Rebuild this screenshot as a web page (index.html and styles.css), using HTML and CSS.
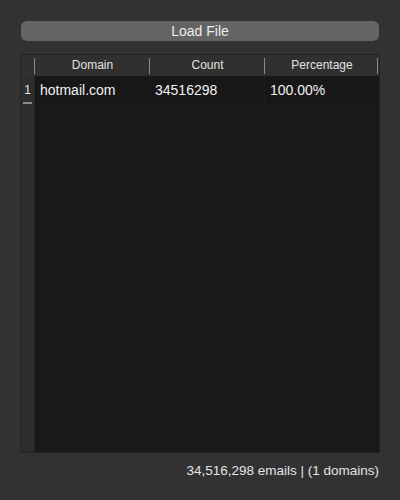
FILE: index.html
```html
<!DOCTYPE html>
<html>
<head>
<meta charset="utf-8">
<link rel="stylesheet" href="styles.css">
</head>
<body>
<div class="app">
  <button class="load-btn">Load File</button>
  <div class="table">
    <div class="head">
      <div class="corner"></div>
      <div class="hcell">Domain</div>
      <div class="hcell">Count</div>
      <div class="hcell last">Percentage</div>
    </div>
    <div class="body">
      <div class="rowheads">
        <div class="rownum">1</div>
      </div>
      <div class="rows">
        <div class="row">
          <div class="cell">hotmail.com</div>
          <div class="cell">34516298</div>
          <div class="cell">100.00%</div>
        </div>
      </div>
    </div>
  </div>
  <div class="status">34,516,298 emails | (1 domains)</div>
</div>
</body>
</html>
```
FILE: styles.css
```css
html, body {
  margin: 0;
  padding: 0;
  background: #323232;
  font-family: "Liberation Sans", Arial, sans-serif;
  color: #e6e6e6;
}
.app {
  width: 400px;
  height: 500px;
  box-sizing: border-box;
  padding: 21px 20px 0 20px;
  display: flex;
  flex-direction: column;
}
.load-btn {
  margin: 0 1px;
  height: 20px;
  border: none;
  border-radius: 6px;
  background: #646464;
  color: #ececec;
  font-family: "Liberation Sans", Arial, sans-serif;
  font-size: 14px;
  padding: 0;
  line-height: 20px;
}
.table {
  margin-top: 13px;
  height: 399px;
  box-sizing: border-box;
  border: 1px solid #242424;
  display: flex;
  flex-direction: column;
  background: #191919;
}
.head {
  height: 21px;
  display: grid;
  grid-template-columns: 14px 115px 115px 114px;
  background: #303030;
  flex: none;
}
.hcell {
  font-size: 12px;
  line-height: 21px;
  text-align: center;
  color: #e2e2e2;
  position: relative;
}
.corner { position: relative; }
.corner::after, .hcell::after {
  content: "";
  position: absolute;
  right: 0;
  top: 3px;
  height: 16px;
  width: 1px;
  background: #8a8a8a;
}
.hcell.last::after { right: 1px; }
.body {
  flex: 1;
  display: grid;
  grid-template-columns: 14px 1fr;
}
.rowheads {
  background: #2d2d2d;
  border-right: 1px solid #262626;
}
.rownum {
  height: 27px;
  font-size: 12px;
  line-height: 28px;
  text-align: center;
  color: #e6e6e6;
  position: relative;
}
.rownum::after {
  content: "";
  position: absolute;
  left: 2px;
  right: 2px;
  bottom: -1px;
  height: 2px;
  background: #8c8c8c;
}
.row {
  height: 27px;
  display: grid;
  grid-template-columns: 115px 115px 1fr;
}
.cell {
  font-size: 14px;
  line-height: 28px;
  padding-left: 5px;
  color: #f2f2f2;
  background: #171717;
  border-right: 1px solid #1c1c1c;
}
.cell:last-child { border-right: none; }
.status {
  margin-top: 10px;
  text-align: right;
  font-size: 13.5px;
  color: #e4e4e4;
  padding-right: 1px;
}
```
